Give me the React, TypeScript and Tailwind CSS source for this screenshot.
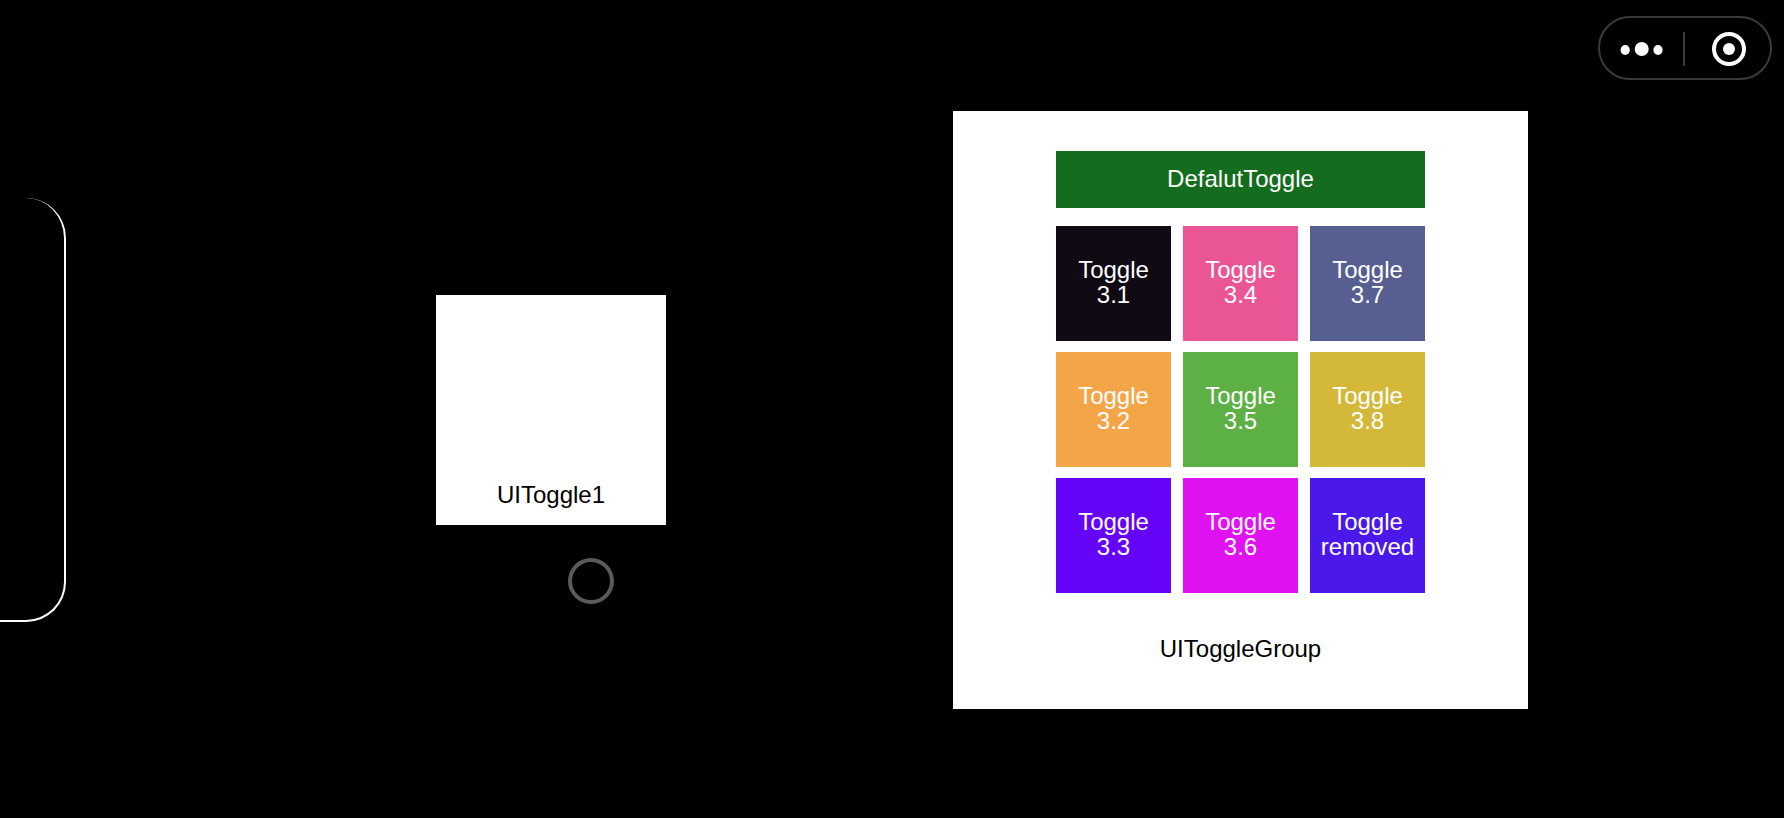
import { useState } from 'react'
import clsx from 'clsx'

const TOGGLES = [
  { name: '3.1', color: 'bg-[#100a14]' },
  { name: '3.4', color: 'bg-[#ea5596]' },
  { name: '3.7', color: 'bg-[#565f90]' },
  { name: '3.2', color: 'bg-[#f4a548]' },
  { name: '3.5', color: 'bg-[#5db043]' },
  { name: '3.8', color: 'bg-[#d3b83a]' },
  { name: '3.3', color: 'bg-[#6405f9]' },
  { name: '3.6', color: 'bg-[#e112f1]' },
  { name: 'removed', color: 'bg-[#4a18e8]' },
]

function CapsuleMenu() {
  return (
    <div className="absolute top-4 right-3 flex h-16 w-[174px] items-center rounded-full border-2 border-[#3a3a3a]">
      <button
        type="button"
        aria-label="More"
        className="flex h-full flex-1 items-center justify-center"
      >
        <svg width="44" height="18" viewBox="0 0 44 18" fill="#fff">
          <ellipse cx="5.2" cy="11" rx="4.6" ry="5" />
          <circle cx="21.7" cy="10" r="7" />
          <ellipse cx="38" cy="11" rx="4.6" ry="5" />
        </svg>
      </button>
      <span className="mt-0.5 h-[34px] w-0.5 bg-[#3a3a3a]" />
      <button
        type="button"
        aria-label="Close"
        className="flex h-full flex-1 items-center justify-center pt-0.5 pl-0.5"
      >
        <svg width="34" height="34" viewBox="0 0 34 34" fill="none">
          <circle cx="17" cy="17" r="15" stroke="#fff" strokeWidth="4" />
          <circle cx="17" cy="17" r="6" fill="#fff" />
        </svg>
      </button>
    </div>
  )
}

function ToggleGroup() {
  const [selected, setSelected] = useState('')

  return (
    <section
      aria-labelledby="group-title"
      className="col-start-5 flex flex-col items-center bg-white px-6 pt-10 pb-12"
    >
      <div className="w-[369px] text-white">
        <button
          type="button"
          aria-pressed={selected === 'default'}
          onClick={() => setSelected('default')}
          className="mb-[18px] block h-[57px] w-full bg-[#146c1e] pb-0.5"
        >
          DefalutToggle
        </button>
        <div className="grid grid-cols-3 gap-x-3 gap-y-[11px]">
          {TOGGLES.map(({ name, color }) => (
            <button
              key={name}
              type="button"
              aria-pressed={selected === name}
              onClick={() => setSelected(name)}
              className={clsx('h-[115px] pb-1', color)}
            >
              Toggle
              <br />
              {name}
            </button>
          ))}
        </div>
      </div>
      <h2 id="group-title" className="mt-[43px]">
        UIToggleGroup
      </h2>
    </section>
  )
}

export default function App() {
  const [on, setOn] = useState(false)

  return (
    <main className="relative grid min-h-screen grid-cols-[66px_370fr_230px_287fr_575px_256fr] items-center overflow-hidden bg-black pt-0.5 font-['Liberation_Sans',Arial,sans-serif] text-2xl leading-[25px] text-black">
      <div className="h-[424px] rounded-r-[40px] border-r-2 border-b-2 border-white" />

      <div className="relative col-start-3">
        <button
          type="button"
          aria-pressed={on}
          onClick={() => setOn(!on)}
          className="flex h-[230px] w-full items-end justify-center bg-white pb-[18px]"
        >
          UIToggle1
        </button>
        {/* touch indicator */}
        <span className="absolute top-[263px] left-[132px] size-[46px] rounded-full border-4 border-[#5a5a5c]" />
      </div>

      <ToggleGroup />
      <CapsuleMenu />
    </main>
  )
}
